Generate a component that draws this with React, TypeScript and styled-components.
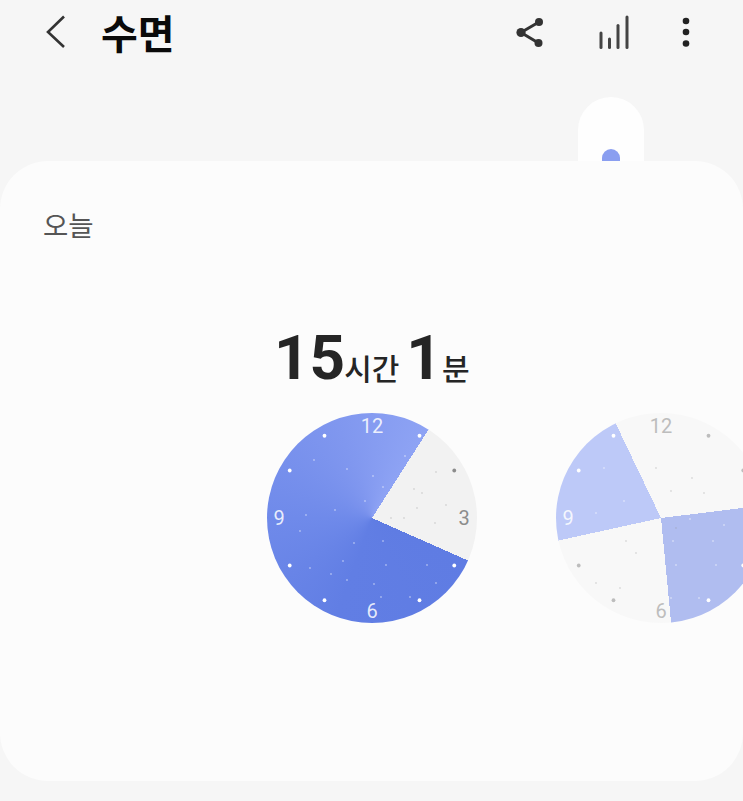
import styled, { createGlobalStyle } from "styled-components";

const GlobalStyle = createGlobalStyle`
  html, body {
    margin: 0;
    padding: 0;
    background: #f6f6f6;
  }
`;

type Arc = { from: number; to: number };
type Speck = [number, number];

const CENTER = 105;
const TICKS = [30, 60, 120, 150, 210, 240, 300, 330];
const NUMERALS = [
  { label: "12", deg: 0, x: 105, y: 13 },
  { label: "3", deg: 90, x: 197, y: 105 },
  { label: "6", deg: 180, x: 105, y: 198 },
  { label: "9", deg: 270, x: 12, y: 105 },
];

const polar = (deg: number, r: number) => {
  const a = (deg * Math.PI) / 180;
  return [CENTER + r * Math.sin(a), CENTER - r * Math.cos(a)];
};

const inArc = (deg: number, arcs: Arc[]) =>
  arcs.some((w) => (deg >= w.from && deg <= w.to) || (deg + 360 >= w.from && deg + 360 <= w.to));

const todayArcs: Arc[] = [{ from: 113.9, to: 392.6 }];
const prevArcs: Arc[] = [
  { from: 257.6, to: 334.4 },
  { from: 83, to: 174.5 },
];

const todayFace = `conic-gradient(from 113.9deg, #5f7ce3 0deg, #617ee4 86deg, #6f8aea 156deg,
  #8097ef 226deg, #8ea3f4 278.7deg, #f2f2f2 278.7deg, #f2f2f2 360deg)`;
const prevFace = `conic-gradient(#f8f8f8 0deg 83deg, #b0bdf0 83deg 174.5deg, #f8f8f8 174.5deg 257.6deg,
  #bdc9f8 257.6deg 334.4deg, #f8f8f8 334.4deg 360deg)`;

const todaySpecks: Speck[] = [
  [47, 47], [80, 56], [106, 63], [116, 74], [98, 88], [68, 97], [39, 102], [33, 118], [87, 130],
  [116, 128], [76, 148], [119, 152], [160, 152], [43, 155], [64, 161], [80, 167], [107, 171],
  [114, 184], [143, 184], [138, 43], [169, 170],
];
const todayGraySpecks: Speck[] = [
  [169, 59], [147, 76], [179, 92], [168, 110], [124, 105], [137, 105], [155, 80], [150, 95],
];
const prevSpecks: Speck[] = [
  [48, 55], [68, 88], [101, 92], [134, 106], [168, 112], [117, 128], [157, 128], [120, 152],
  [160, 152], [115, 185], [143, 185], [40, 100],
];
const prevGraySpecks: Speck[] = [
  [100, 55], [136, 65], [115, 78], [148, 80], [120, 115], [80, 140], [64, 175], [70, 128], [40, 170],
];

const Dial = ({
  arcs,
  face,
  specks,
  graySpecks,
  offColor,
  labels,
}: {
  arcs: Arc[];
  face: string;
  specks: Speck[];
  graySpecks: Speck[];
  offColor: string;
  labels: string[];
}) => (
  <DialFace $face={face}>
    <svg width="210" height="210" viewBox="0 0 210 210">
      {specks.map(([x, y]) => (
        <circle key={`${x}-${y}`} cx={x} cy={y} r="0.9" fill="#ffffff" opacity="0.45" />
      ))}
      {graySpecks.map(([x, y]) => (
        <circle key={`${x}-${y}`} cx={x} cy={y} r="0.9" fill="#999999" opacity="0.3" />
      ))}
      {TICKS.map((deg) => {
        const [x, y] = polar(deg, 95);
        return <circle key={deg} cx={x} cy={y} r="1.9" fill={inArc(deg, arcs) ? "#ffffff" : offColor} />;
      })}
      {NUMERALS.filter((n) => labels.includes(n.label)).map((n) => (
        <Numeral key={n.label} x={n.x} y={n.y} $on={inArc(n.deg, arcs)} $off={offColor}>
          {n.label}
        </Numeral>
      ))}
    </svg>
  </DialFace>
);

const App = () => {
  return (
    <>
      <GlobalStyle />
      <Page>
        <TopBar>
          <BackIcon width="20" height="34" viewBox="0 0 20 34">
            <polyline points="18,1.5 2,17 18,32" fill="none" stroke="#333" strokeWidth="2.6" />
          </BackIcon>
          <Title>수면</Title>
          <Actions>
            <svg width="30" height="30" viewBox="0 0 30 30">
              <path d="M23 5 5 15.500 22.500 26" fill="none" stroke="#333" strokeWidth="3" />
              <circle cx="5" cy="15.500" r="4.600" fill="#333" />
              <circle cx="23" cy="5" r="4" fill="#333" />
              <circle cx="22.500" cy="26" r="4" fill="#333" />
            </svg>
            <svg width="32" height="36" viewBox="0 0 32 36">
              <g stroke="#444" strokeWidth="3" strokeLinecap="round">
                <line x1="3" y1="19" x2="3" y2="33.500" />
                <line x1="11.500" y1="25" x2="11.500" y2="33.500" />
                <line x1="20" y1="11.500" x2="20" y2="33.500" />
                <line x1="29" y1="3" x2="29" y2="33.500" />
              </g>
            </svg>
            <svg width="8" height="30" viewBox="0 0 8 30">
              <circle cx="4" cy="4" r="3.300" fill="#222" />
              <circle cx="4" cy="15" r="3.300" fill="#222" />
              <circle cx="4" cy="26.500" r="3.300" fill="#222" />
            </svg>
          </Actions>
        </TopBar>
        <HandleRow>
          <Handle>
            <HandleDot />
          </Handle>
        </HandleRow>
        <Card>
          <DayLabel>오늘</DayLabel>
          <Duration>
            <BigNumber>15</BigNumber>
            <Unit>시간</Unit>
            <BigNumber $gap>1</BigNumber>
            <Unit $gap>분</Unit>
          </Duration>
          <DialTrack>
            <Dial
              arcs={todayArcs}
              face={todayFace}
              specks={todaySpecks}
              graySpecks={todayGraySpecks}
              offColor="#8c8c8c"
              labels={["12", "3", "6", "9"]}
            />
            <Dial
              arcs={prevArcs}
              face={prevFace}
              specks={prevSpecks}
              graySpecks={prevGraySpecks}
              offColor="#bdbdbd"
              labels={["12", "6", "9"]}
            />
          </DialTrack>
        </Card>
      </Page>
    </>
  );
};

export default App;

const Page = styled.div`
  width: 743px;
  height: 801px;
  overflow: hidden;
  background: #f6f6f6;
  font-family: "Noto Sans CJK KR", "Noto Sans", sans-serif;
`;

const TopBar = styled.header`
  height: 64px;
  display: flex;
  align-items: center;
  padding: 0 53px 0 46px;
`;

const BackIcon = styled.svg`
  flex: none;
`;

const Title = styled.h1`
  margin: 0 0 0 35px;
  font-size: 40px;
  font-weight: 700;
  line-height: 64px;
  color: #0a0a0a;
`;

const Actions = styled.div`
  margin-left: auto;
  display: flex;
  align-items: center;
  gap: 52px;
`;

const HandleRow = styled.div`
  margin-top: 33px;
  height: 64px;
  display: flex;
  justify-content: flex-end;
  padding-right: 99px;
`;

const Handle = styled.div`
  width: 66px;
  height: 64px;
  border-radius: 33px 33px 0 0;
  background: #fefefe;
  display: flex;
  align-items: flex-end;
  justify-content: center;
`;

const HandleDot = styled.div`
  width: 18px;
  height: 12px;
  border-radius: 9px 9px 0 0;
  background: #8a9ef0;
`;

const Card = styled.main`
  height: 620px;
  border-radius: 48px;
  background: #fcfcfc;
  overflow: hidden;
`;

const DayLabel = styled.div`
  margin: 45px 0 0 43px;
  font-size: 27.5px;
  font-weight: 400;
  line-height: 36px;
  color: #555;
`;

const Duration = styled.div`
  margin: 76px 0 0 274px;
  height: 84px;
  display: flex;
  align-items: baseline;
  color: #252525;
`;

const BigNumber = styled.span<{ $gap?: boolean }>`
  font-family: Roboto, "Liberation Sans", sans-serif;
  font-size: 62px;
  font-weight: 700;
  line-height: 80px;
  margin-left: ${(p) => (p.$gap ? "7px" : "0")};
`;

const Unit = styled.span<{ $gap?: boolean }>`
  font-size: 30px;
  font-weight: 500;
  line-height: 40px;
  margin-left: ${(p) => (p.$gap ? "0" : "-1px")};
  position: relative;
  top: 1px;
`;

const DialTrack = styled.div`
  margin-top: 11px;
  padding-left: 267px;
  display: flex;
  gap: 79px;
`;

const DialFace = styled.div<{ $face: string }>`
  flex: none;
  width: 210px;
  height: 210px;
  border-radius: 50%;
  background: ${(p) => p.$face};
`;

const Numeral = styled.text<{ $on: boolean; $off: string }>`
  font-family: Roboto, "Liberation Sans", sans-serif;
  font-size: 20px;
  text-anchor: middle;
  dominant-baseline: central;
  fill: ${(p) => (p.$on ? "rgba(255,255,255,0.85)" : p.$off)};
`;
